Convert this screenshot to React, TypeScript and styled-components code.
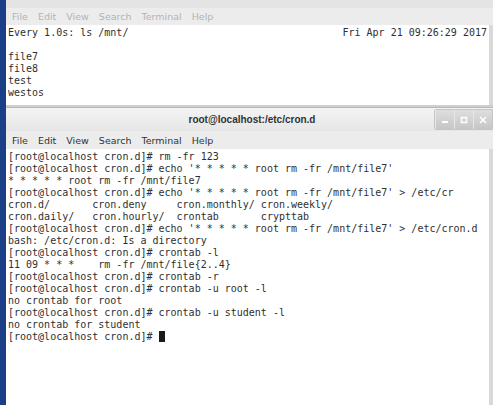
import React from 'react';
import styled, { createGlobalStyle } from 'styled-components';

const GlobalStyle = createGlobalStyle`
  html, body {
    margin: 0;
    padding: 0;
    width: 493px;
    height: 405px;
    overflow: hidden;
    background: #1b3f86;
  }
`;

const Desktop = styled.div`
  display: flex;
  width: 493px;
  height: 405px;
  background: #1b3f86;
`;

const Stack = styled.div`
  margin-left: 6px;
  flex: 1;
  display: flex;
  flex-direction: column;
  min-width: 0;
`;

const Window = styled.div<{ $active?: boolean; $grow?: boolean }>`
  display: flex;
  flex-direction: column;
  background: #ececec;
  flex: ${p => (p.$grow ? 1 : 'none')};
  border-top: ${p => (p.$active ? '1px solid #b8b8b8' : 'none')};
`;

const TopEdge = styled.div`
  height: 8px;
  background: #e4e4e4;
`;

const TitleBar = styled.div`
  height: 23px;
  display: flex;
  align-items: center;
  justify-content: center;
  position: relative;
  background: linear-gradient(#f4f4f4, #e6e6e6);
  font-family: 'Liberation Sans', Arial, sans-serif;
  font-weight: bold;
  font-size: 10px;
  color: #2e3436;
`;

const Title = styled.span`
  margin-left: 5px;
`;

const Buttons = styled.div`
  position: absolute;
  right: 0;
  top: 1px;
  display: flex;
  height: 19px;
  border: 1px solid #c4c4c4;
  border-radius: 2px 0 0 2px;
`;

const WinButton = styled.div`
  width: 18px;
  display: flex;
  align-items: center;
  justify-content: center;
  background: linear-gradient(#dedede, #c6c6c6);
  border-left: 1px solid #e8e8e8;
`;

const MenuBar = styled.div<{ $dim?: boolean }>`
  height: ${p => (p.$dim ? '17px' : '18px')};
  display: flex;
  align-items: center;
  gap: 10px;
  padding-left: 6px;
  font-family: 'DejaVu Sans', Verdana, sans-serif;
  font-size: 9.5px;
  color: ${p => (p.$dim ? '#b4b4b4' : '#2e3436')};
`;

const Screen = styled.div<{ $grow?: boolean }>`
  background: #fff;
  border-right: 4px solid #d9d9d9;
  flex: ${p => (p.$grow ? 1 : 'none')};
  padding: 2px 2px ${p => (p.$grow ? '0' : '6px')} 2px;
  font-family: 'DejaVu Sans Mono', 'Liberation Mono', monospace;
  font-size: 10px;
  line-height: 12px;
  color: #2f2f2f;
  white-space: pre;
  overflow: hidden;
`;

const Line = styled.div`
  display: flex;
  justify-content: space-between;
  height: 12px;
`;

const Divider = styled.div`
  height: 2px;
  background: #cfcfcf;
`;

const Cursor = styled.span`
  display: inline-block;
  width: 6px;
  height: 11px;
  vertical-align: -2px;
  background: #1a1a1a;
`;

const watchLines = ['', 'file7', 'file8', 'test', 'westos'];

const shellLines = [
  "[root@localhost cron.d]# rm -fr 123",
  "[root@localhost cron.d]# echo '* * * * * root rm -fr /mnt/file7'",
  "* * * * * root rm -fr /mnt/file7",
  "[root@localhost cron.d]# echo '* * * * * root rm -fr /mnt/file7' > /etc/cr",
  "cron.d/       cron.deny     cron.monthly/ cron.weekly/",
  "cron.daily/   cron.hourly/  crontab       crypttab",
  "[root@localhost cron.d]# echo '* * * * * root rm -fr /mnt/file7' > /etc/cron.d",
  "bash: /etc/cron.d: Is a directory",
  "[root@localhost cron.d]# crontab -l",
  "11 09 * * *    rm -fr /mnt/file{2..4}",
  "[root@localhost cron.d]# crontab -r",
  "[root@localhost cron.d]# crontab -u root -l",
  "no crontab for root",
  "[root@localhost cron.d]# crontab -u student -l",
  "no crontab for student",
];

const menus = ['File', 'Edit', 'View', 'Search', 'Terminal', 'Help'];

const App = () => {
  return (
    <>
      <GlobalStyle />
      <Desktop>
        <Stack>
          <Window>
            <TopEdge />
            <MenuBar $dim>
              {menus.map(m => <span key={m}>{m}</span>)}
            </MenuBar>
            <Screen>
              <Line>
                <span>Every 1.0s: ls /mnt/</span>
                <span>Fri Apr 21 09:26:29 2017</span>
              </Line>
              {watchLines.map((l, i) => <Line key={i}>{l}</Line>)}
            </Screen>
            <Divider />
          </Window>
          <Window $active $grow>
            <TitleBar>
              <Title>root@localhost:/etc/cron.d</Title>
              <Buttons>
                <WinButton>
                  <svg width="8" height="8" viewBox="0 0 8 8"><rect x="1" y="5" width="6" height="2" fill="#fff" /></svg>
                </WinButton>
                <WinButton>
                  <svg width="8" height="8" viewBox="0 0 8 8"><rect x="1.5" y="1.5" width="5" height="5" fill="none" stroke="#fff" strokeWidth="1.5" /></svg>
                </WinButton>
                <WinButton>
                  <svg width="8" height="8" viewBox="0 0 8 8"><path d="M1 1 L7 7 M7 1 L1 7" stroke="#fff" strokeWidth="1.6" /></svg>
                </WinButton>
              </Buttons>
            </TitleBar>
            <MenuBar>
              {menus.map(m => <span key={m}>{m}</span>)}
            </MenuBar>
            <Screen $grow>
              {shellLines.map((l, i) => <Line key={i}>{l}</Line>)}
              <Line>
                <span>[root@localhost cron.d]# <Cursor /></span>
              </Line>
            </Screen>
          </Window>
        </Stack>
      </Desktop>
    </>
  );
};

export default App;
